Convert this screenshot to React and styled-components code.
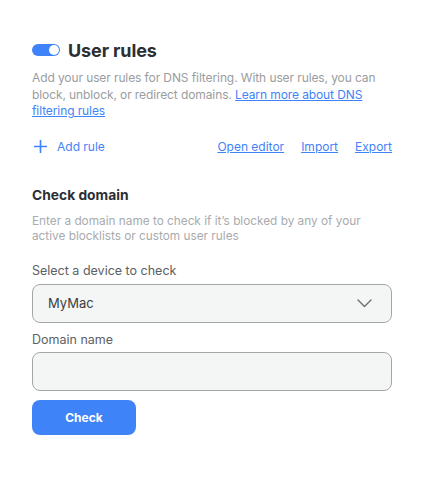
import React from "react";
import styled, { createGlobalStyle } from "styled-components";

const Global = createGlobalStyle`
  html, body { margin: 0; padding: 0; background: #ffffff; }
  body { font-family: Inter, "Noto Sans", sans-serif; -webkit-font-smoothing: antialiased; }
  * { box-sizing: border-box; }
`;

const Page = styled.div`
  width: 425px;
  padding: 38px 33px 40px 32px;
  display: flex;
  flex-direction: column;
`;

const TitleRow = styled.div`
  display: flex;
  align-items: center;
  gap: 8px;
  height: 24px;
`;

const Toggle = styled.span`
  position: relative;
  width: 28px;
  height: 12px;
  border-radius: 6px;
  background: #3f83f8;
  flex: none;
  &::after {
    content: "";
    position: absolute;
    right: 1px;
    top: 1px;
    width: 10px;
    height: 10px;
    border-radius: 50%;
    background: #fff;
  }
`;

const Title = styled.h1`
  margin: 0;
  font-size: 18px;
  font-weight: 700;
  color: #2b2f33;
  letter-spacing: -0.1px;
`;

const Desc = styled.p`
  margin: 8px 0 0;
  font-size: 12px;
  letter-spacing: -0.1px;
  line-height: 16.5px;
  color: #9a9da0;
`;

const Link = styled.a`
  color: #3f83f8;
  text-decoration: underline;
  text-underline-offset: 1px;
  cursor: pointer;
`;

const Actions = styled.div`
  display: flex;
  align-items: center;
  margin-top: 17px;
  height: 20px;
  font-size: 12px;
`;

const AddRule = styled.button`
  display: flex;
  align-items: center;
  gap: 10px;
  padding: 0 0 0 2px;
  border: 0;
  background: none;
  color: #3f83f8;
  font: inherit;
  cursor: pointer;
`;

const Spacer = styled.div`
  flex: 1;
`;

const ActionLinks = styled.div`
  display: flex;
  gap: 17px;
`;

const SectionTitle = styled.h2`
  margin: 28px 0 0;
  font-size: 13.8px;
  font-weight: 700;
  color: #2b2f33;
  line-height: 20px;
`;

const SubDesc = styled.p`
  margin: 9px 0 0;
  font-size: 11.8px;
  line-height: 15.5px;
  color: #a8abae;
`;

const Label = styled.label`
  display: block;
  margin-top: ${(p) => p.$top}px;
  font-size: 12.5px;
  line-height: 16px;
  color: #5c6064;
`;

const Field = styled.div`
  margin-top: ${(p) => p.$top}px;
  height: 39px;
  border: 1px solid #a4a7aa;
  border-radius: 8px;
  background: #f4f5f5;
  display: flex;
  align-items: center;
  padding: 0 19px 0 15px;
  font-size: 13px;
  color: #3a3e42;
`;

const Button = styled.button`
  margin-top: 9px;
  width: 104px;
  height: 35px;
  border: 0;
  border-radius: 8px;
  background: #3f83f8;
  color: #fff;
  font-family: Inter, sans-serif;
  font-size: 12px;
  font-weight: 700;
  cursor: pointer;
`;

export default function App() {
  return (
    <>
      <Global />
      <Page>
        <TitleRow>
          <Toggle />
          <Title>User rules</Title>
        </TitleRow>
        <Desc>
          Add your user rules for DNS filtering. With user rules, you can block, unblock, or redirect domains.{" "}
          <Link>Learn more about DNS filtering rules</Link>
        </Desc>
        <Actions>
          <AddRule>
            <svg width="13" height="13" viewBox="0 0 13 13">
              <path d="M6.5 0.5v12M0.5 6.5h12" stroke="#3f83f8" strokeWidth="1.6" strokeLinecap="round" />
            </svg>
            Add rule
          </AddRule>
          <Spacer />
          <ActionLinks>
            <Link>Open editor</Link>
            <Link>Import</Link>
            <Link>Export</Link>
          </ActionLinks>
        </Actions>
        <SectionTitle>Check domain</SectionTitle>
        <SubDesc>
          Enter a domain name to check if it’s blocked by any of your active blocklists or custom user rules
        </SubDesc>
        <Label $top={18}>Select a device to check</Label>
        <Field $top={5}>
          MyMac
          <Spacer />
          <svg width="15" height="9" viewBox="0 0 15 9">
            <path d="M1 1l6.5 6.5L14 1" fill="none" stroke="#6b6f73" strokeWidth="1.4" strokeLinecap="round" strokeLinejoin="round" />
          </svg>
        </Field>
        <Label $top={9}>Domain name</Label>
        <Field $top={4} />
        <Button>Check</Button>
      </Page>
    </>
  );
}
